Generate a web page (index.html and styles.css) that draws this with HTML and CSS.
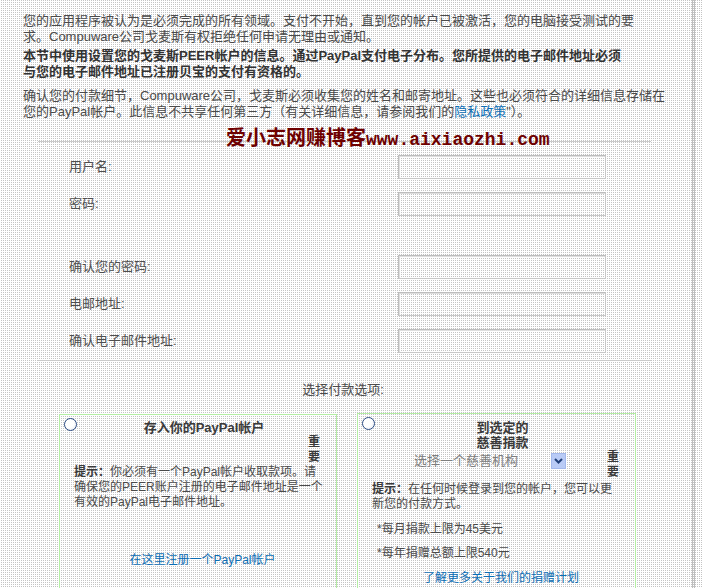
FILE: index.html
```html
<!DOCTYPE html>
<html lang="zh-CN">
<head>
<meta charset="utf-8">
<title>PayPal 帐户设置</title>
<link rel="stylesheet" href="styles.css">
</head>
<body>
<div class="page">
  <p class="intro">您的应用程序被认为是必须完成的所有领域。支付不开始，直到您的帐户已被激活，您的电脑接受测试的要<br>求。Compuware公司戈麦斯有权拒绝任何申请无理由或通知。</p>
  <p class="intro strong">本节中使用设置您的戈麦斯PEER帐户的信息。通过PayPal支付电子分布。您所提供的电子邮件地址必须<br>与您的电子邮件地址已注册贝宝的支付有资格的。</p>
  <p class="intro gap">确认您的付款细节，Compuware公司，戈麦斯必须收集您的姓名和邮寄地址。这些也必须符合的详细信息存储在<br>您的PayPal帐户。此信息不共享任何第三方（有关详细信息，请参阅我们的<a href="#" class="link">隐私政策</a>"）。</p>

  <div class="banner">
    <div class="watermark"><span class="wm-cn">爱小志网赚博客</span><span class="wm-en">www.aixiaozhi.com</span></div>
  </div>

  <form class="account">
    <label class="lbl" for="u">用户名:</label><input class="field" id="u" type="text">
    <label class="lbl" for="p">密码:</label><input class="field" id="p" type="password">
    <div class="spacer"></div><div class="spacer"></div>
    <label class="lbl" for="p2">确认您的密码:</label><input class="field" id="p2" type="password">
    <label class="lbl" for="e">电邮地址:</label><input class="field" id="e" type="text">
    <label class="lbl" for="e2">确认电子邮件地址:</label><input class="field" id="e2" type="text">
  </form>

  <div class="rule"></div>

  <p class="choose">选择付款选项:</p>

  <div class="options">
    <div class="option left">
      <div class="opt-head">
        <input class="radio" type="radio" name="pay">
        <div class="opt-title">存入你的PayPal帐户</div>
      </div>
      <div class="key">重要</div>
      <p class="hint"><b>提示：</b>你必须有一个PayPal帐户收取款项。请<br>确保您的PEER账户注册的电子邮件地址是一个<br>有效的PayPal电子邮件地址。</p>
      <a href="#" class="opt-link first">在这里注册一个PayPal帐户</a>
    </div>
    <div class="option right">
      <div class="opt-head">
        <input class="radio" type="radio" name="pay">
        <div class="opt-title"><span class="narrow">到选定的慈善捐款</span></div>
      </div>
      <div class="pick-row">
        <div class="select"><span class="sel-text">选择一个慈善机构</span><span class="sel-btn"><svg width="9" height="6" viewBox="0 0 9 6"><path d="M1 1 L4.5 4.5 L8 1" fill="none" stroke="#22407a" stroke-width="2"/></svg></span></div>
        <div class="key inline">重要</div>
      </div>
      <p class="hint tight"><b>提示：</b>在任何时候登录到您的帐户，您可以更<br>新您的付款方式。</p>
      <p class="limit">*每月捐款上限为45美元</p>
      <p class="limit">*每年捐赠总额上限540元</p>
      <a href="#" class="opt-link">了解更多关于我们的捐赠计划</a>
    </div>
  </div>
</div>
</body>
</html>
```
FILE: styles.css
```css
html, body {
  margin: 0;
  padding: 0;
}
body {
  background-color: #fff;
  background-image: conic-gradient(#c4c4c4 0 25%, #fff 0);
  background-size: 2px 2px;
  font-family: "Liberation Sans", "Noto Sans CJK SC", sans-serif;
  color: #4a4a4a;
  font-size: 13px;
}
.page {
  box-sizing: border-box;
  width: 695px;
  min-height: 760px;
  border-right: 3px double #bdbdbd;
  padding: 13px 0 0 23px;
}
p { margin: 0; }
.intro {
  line-height: 16px;
  white-space: nowrap;
  font-size: 13px;
}
.strong {
  margin-top: 3px;
  font-weight: 700;
  color: #333;
}
.gap { margin-top: 8px; }
.link {
  color: #0b6db4;
  text-decoration: none;
}
.banner {
  position: relative;
  width: 613px;
  height: 21px;
  margin-left: 15px;
  border-bottom: 1px solid #cacaca;
}
.watermark {
  position: absolute;
  left: 188px;
  top: 6px;
  white-space: nowrap;
  color: #6e0000;
  font-weight: 700;
  line-height: 22px;
}
.wm-cn {
  font-family: "Noto Sans CJK SC", sans-serif;
  font-size: 20px;
}
.wm-en {
  font-family: "Liberation Mono", monospace;
  font-size: 18px;
}
.account {
  display: grid;
  grid-template-columns: 329px 208px;
  row-gap: 13px;
  margin: 13px 0 0 46px;
  align-items: center;
}
.lbl {
  color: #4e4e4e;
  font-size: 13px;
  line-height: 16px;
}
.spacer { height: 13px; }
.field {
  box-sizing: border-box;
  width: 208px;
  height: 24px;
  margin: 0;
  background: transparent;
  border: 1px solid #c8c8c8;
  border-top-color: #bdbdbd;
  border-left-color: #bdbdbd;
  box-shadow: inset 1px 1px 0 #dedede;
}
.rule {
  width: 613px;
  margin: 7px 0 0 15px;
  border-top: 1px solid #cacaca;
}
.choose {
  width: 640px;
  text-align: center;
  line-height: 16px;
  margin-top: 21px;
  color: #4a4a4a;
}
.options {
  display: flex;
  gap: 20px;
  margin: 15px 0 0 36px;
  align-items: flex-start;
}
.option {
  box-sizing: border-box;
  width: 278px;
  min-height: 200px;
  border: 1px solid #b4eea4;
  padding: 3px 5px 0 14px;
  font-size: 12px;
  line-height: 15px;
  color: #4a4a4a;
}
.option.left { margin-top: 1px; }
.option.right { width: 279px; }
.opt-head {
  display: flex;
  align-items: flex-start;
  margin-left: -10px;
}
.radio {
  appearance: none;
  -webkit-appearance: none;
  box-sizing: border-box;
  width: 13px;
  height: 13px;
  margin: 0;
  flex: none;
  border: 1px solid #2a4a82;
  border-radius: 50%;
  background: radial-gradient(circle at 40% 40%, #ffffff 0 45%, #dfe4ee 100%);
}
.opt-title {
  flex: 1;
  margin-top: 2px;
  text-align: center;
  font-weight: 700;
  font-size: 13px;
  color: #3a3a3a;
}
.right .opt-title { margin-top: 3px; }
.narrow {
  display: inline-block;
  width: 54px;
}
.key {
  width: 12px;
  margin: 0 11px 0 auto;
  font-weight: 700;
  color: #3a3a3a;
  line-height: 15px;
}
.key.inline { margin: 0 11px 0 0; }
.hint {
  white-space: nowrap;
}
.hint b { color: #3a3a3a; }
.hint.tight { margin-top: 2px; }
.pick-row {
  display: flex;
  justify-content: space-between;
  align-items: flex-start;
}
.select {
  display: flex;
  align-items: center;
  width: 155px;
  height: 16px;
  margin: 3px 0 0 39px;
  font-size: 13px;
  color: #7e7e7e;
}
.sel-text {
  flex: 1;
  padding-left: 3px;
  line-height: 16px;
}
.sel-btn {
  box-sizing: border-box;
  width: 15px;
  height: 16px;
  display: flex;
  align-items: center;
  justify-content: center;
  background: #b9cbf6;
  border: 1px solid #a3b8ec;
}
.limit {
  margin: 10px 0 0 5px;
}
.limit + .limit { margin-top: 9px; }
.opt-link {
  display: block;
  margin-top: 10px;
  text-align: center;
  color: #0b6db4;
  text-decoration: none;
}
.opt-link.first { margin-top: 43px; }
```
